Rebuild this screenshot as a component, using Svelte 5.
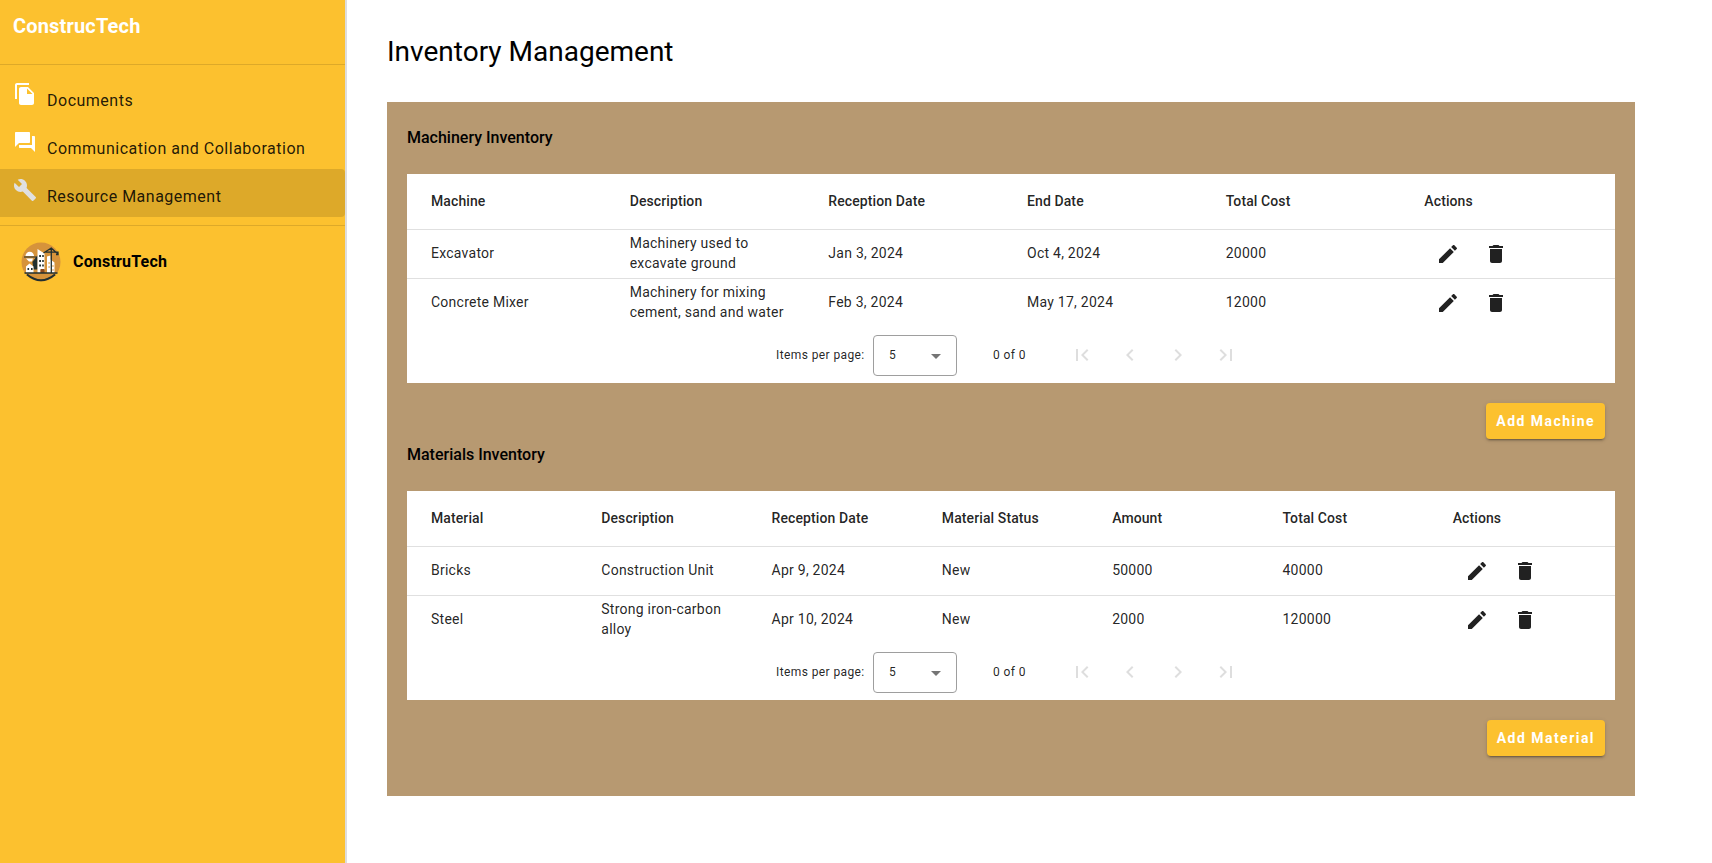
<script>
  const icons = {
    copy: 'M16 1H4c-1.1 0-2 .9-2 2v14h2V3h12V1zm-1 4l6 6v10c0 1.1-.9 2-2 2H7.99C6.89 23 6 22.1 6 21l.01-14c0-1.1.89-2 1.99-2h7zm-1 7h5.5L14 6.5V12z',
    forum: 'M21 6h-2v9H6v2c0 .55.45 1 1 1h11l4 4V7c0-.55-.45-1-1-1zm-4 6V3c0-.55-.45-1-1-1H3c-.55 0-1 .45-1 1v14l4-4h10c.55 0 1-.45 1-1z',
    build: 'M22.7 19l-9.1-9.1c.9-2.3.4-5-1.5-6.9-2-2-5-2.4-7.4-1.3L9 6 6 9 1.6 4.7C.4 7.1.9 10.1 2.9 12.1c1.9 1.9 4.6 2.4 6.9 1.5l9.1 9.1c.4.4 1 .4 1.4 0l2.3-2.3c.5-.4.5-1.1.1-1.4z',
    edit: 'M3 17.25V21h3.75L17.81 9.94l-3.75-3.75L3 17.25zM20.71 7.04c.39-.39.39-1.02 0-1.41l-2.34-2.34c-.39-.39-1.02-.39-1.41 0l-1.83 1.83 3.75 3.75 1.83-1.83z',
    trash: 'M6 19c0 1.1.9 2 2 2h8c1.1 0 2-.9 2-2V7H6v12zM19 4h-3.5l-1-1h-5l-1 1H5v2h14V4z'
  };

  const pages = [
    'M18.41 16.59L13.82 12l4.59-4.59L17 6l-6 6 6 6zM6 6h2v12H6z',
    'M15.41 7.41L14 6l-6 6 6 6 1.41-1.41L10.83 12z',
    'M10 6L8.59 7.41 13.17 12l-4.58 4.59L10 18l6-6z',
    'M5.59 7.41L10.18 12l-4.59 4.59L7 18l6-6-6-6zM16 6h2v12h-2z'
  ];

  const nav = [
    { icon: 'copy', label: 'Documents' },
    { icon: 'forum', label: 'Communication and Collaboration' },
    { icon: 'build', label: 'Resource Management', active: true }
  ];

  const sections = [
    {
      title: 'Machinery Inventory',
      columns: ['Machine', 'Description', 'Reception Date', 'End Date', 'Total Cost'],
      rows: [
        ['Excavator', 'Machinery used to excavate ground', 'Jan 3, 2024', 'Oct 4, 2024', '20000'],
        ['Concrete Mixer', 'Machinery for mixing cement, sand and water', 'Feb 3, 2024', 'May 17, 2024', '12000']
      ],
      add: 'Add Machine'
    },
    {
      title: 'Materials Inventory',
      columns: ['Material', 'Description', 'Reception Date', 'Material Status', 'Amount', 'Total Cost'],
      rows: [
        ['Bricks', 'Construction Unit', 'Apr 9, 2024', 'New', '50000', '40000'],
        ['Steel', 'Strong iron-carbon alloy', 'Apr 10, 2024', 'New', '2000', '120000']
      ],
      add: 'Add Material'
    }
  ];
</script>

{#snippet glyph(d)}
  <svg class="glyph" viewBox="0 0 24 24" aria-hidden="true"><path {d} /></svg>
{/snippet}

<div class="app">
  <aside>
    <div class="brand">ConstrucTech</div>
    <nav>
      {#each nav as item}
        <a class="item" class:active={item.active} href="#top">
          {@render glyph(icons[item.icon])}
          <span>{item.label}</span>
        </a>
      {/each}
    </nav>
    <div class="user">
      <svg class="avatar" viewBox="0 0 40 40" aria-hidden="true">
        <circle cx="20" cy="20" r="19.5" fill="#d6933b" />
        <path d="M6 32.5q14 11.5 28 0" fill="none" stroke="#22302f" stroke-width="2" />
        <path d="M4.5 14a4.2 4.2 0 0 1 8.5 0z" fill="#fff" />
        <path d="M5 16.5h7l-1 3H8z" fill="#fff" />
        <path d="M3 15h12.5M12 20l4-5v12h-3z" fill="#22302f" stroke="#22302f" stroke-width="1.2" />
        <path d="M5 31v-6.5l3.5-3 4 3V31z" fill="#fff" />
        <path d="M16.5 31V7l7 4.5V28h-4v3z" fill="#fff" />
        <path d="M19.5 27h4v4h-4z" fill="#8b4a1d" />
        <path d="M26 31V14.5l3.5-1v4l4 3V31z" fill="#fff" />
        <path d="M18.2 14h1.8M21.2 14h1.6M18.2 19h1.8M21.2 19h1.6M18.2 23.5h1.8M21.2 23.5h1.6" stroke="#22302f" stroke-width="1.8" />
        <path d="M6.5 27h1.6M10 27h1.6" stroke="#22302f" stroke-width="2" />
        <path d="M27.5 21h1.2M31.4 24h1.2M27.5 25h1.2M31.4 28h1.2" stroke="#d6933b" stroke-width="1.6" />
        <path d="M30.3 5.5V31M22.5 11l7.8-5 6.5 6M24.5 10.2h12.5v2.5h-2" fill="none" stroke="#22302f" stroke-width="1.3" />
        <path d="M3.5 31h33" stroke="#22302f" stroke-width="1.5" />
      </svg>
      <strong>ConstruTech</strong>
    </div>
  </aside>

  <main>
    <h1>Inventory Management</h1>
    <div class="card">
      {#each sections as section}
        <section>
          <h2>{section.title}</h2>
          <div class="panel">
            <div class="row head">
              {#each section.columns as column}
                <div class="cell">{column}</div>
              {/each}
              <div class="cell">Actions</div>
            </div>
            {#each section.rows as row}
              <div class="row body">
                {#each row as value}
                  <div class="cell">{value}</div>
                {/each}
                <div class="cell actions">
                  <button aria-label="Edit">{@render glyph(icons.edit)}</button>
                  <button aria-label="Delete">{@render glyph(icons.trash)}</button>
                </div>
              </div>
            {/each}
            <div class="paginator">
              <span class="label">Items per page:</span>
              <div class="select">
                <span>5</span>
                <svg viewBox="0 0 10 5" aria-hidden="true"><path d="M0 0h10L5 5z" /></svg>
              </div>
              <span class="range">0 of 0</span>
              <div class="pages">
                {#each pages as d}
                  <span class="page">{@render glyph(d)}</span>
                {/each}
              </div>
            </div>
          </div>
          <div class="footer"><button class="add">{section.add}</button></div>
        </section>
      {/each}
    </div>
  </main>
</div>

<style>
  :global(body) {
    background: #fff;
    font-family: Roboto, 'Liberation Sans', sans-serif;
  }
  .app {
    display: flex;
    height: 863px;
    overflow: hidden;
  }
  .glyph {
    display: block;
    width: 24px;
    height: 24px;
    fill: currentColor;
    flex: none;
  }
  button {
    border: 0;
    background: none;
    padding: 0;
    font: inherit;
    color: inherit;
  }

  aside {
    flex: none;
    width: 345px;
    background: #fcc12f;
    border-right: 2px solid #ddd;
  }
  .brand {
    height: 64px;
    box-sizing: border-box;
    padding: 14px 13px 0;
    font-size: 20px;
    line-height: 24px;
    font-weight: 700;
    letter-spacing: 0.17px;
    color: #fff;
  }
  nav {
    border-top: 1px solid rgba(0, 0, 0, 0.12);
    border-bottom: 1px solid rgba(0, 0, 0, 0.12);
    padding: 8px 0;
  }
  .item {
    display: flex;
    height: 48px;
    box-sizing: border-box;
    padding: 9px 13px 0;
    gap: 10px;
    border-radius: 0 4px 4px 0;
    color: #fff;
    text-decoration: none;
  }
  .item span {
    padding-top: 7px;
    font-size: 16px;
    line-height: 24px;
    letter-spacing: 0.5px;
    color: rgba(0, 0, 0, 0.87);
  }
  .item.active {
    background: rgba(0, 0, 0, 0.12);
    color: #e0e0e0;
  }
  .user {
    display: flex;
    align-items: center;
    gap: 12px;
    padding: 16px 21px;
  }
  .avatar {
    width: 40px;
    height: 40px;
  }
  .user strong {
    font-size: 16px;
    line-height: 24px;
    font-weight: 700;
    letter-spacing: 0.18px;
  }

  main {
    flex: 1;
    padding: 34px 77px 0 40px;
  }
  h1 {
    margin: 0 0 32px;
    font-size: 28px;
    line-height: 36px;
    font-weight: 400;
    color: #000;
  }
  .card {
    background: #b79971;
    padding: 20px 20px 40px;
  }
  h2 {
    margin: 0 0 20px;
    font-size: 16px;
    line-height: 32px;
    font-weight: 500;
    color: #000;
  }
  .panel {
    background: #fff;
    color: rgba(0, 0, 0, 0.87);
  }
  .row {
    display: flex;
    align-items: center;
    height: 48px;
    border-bottom: 1px solid #e0e0e0;
    font-size: 14px;
    line-height: 20px;
    letter-spacing: 0.25px;
  }
  .row.head {
    height: 55px;
    font-weight: 500;
    letter-spacing: 0.1px;
  }
  .row.body:nth-last-child(2) {
    border-bottom: 0;
  }
  .cell {
    flex: 1 1 0;
    padding: 0 16px 2px;
    min-width: 0;
  }
  .cell:first-child {
    padding-left: 24px;
  }
  .cell:last-child {
    padding-right: 24px;
  }
  .cell.actions {
    display: flex;
    padding-bottom: 0;
  }
  .actions button {
    width: 48px;
    height: 48px;
    padding: 12px;
  }

  .paginator {
    display: flex;
    align-items: center;
    height: 56px;
    padding-left: 369px;
    font-size: 12px;
    line-height: 20px;
    letter-spacing: 0.4px;
  }
  .label {
    width: 97px;
  }
  .select {
    display: flex;
    align-items: center;
    justify-content: space-between;
    box-sizing: border-box;
    width: 84px;
    height: 41px;
    padding: 0 15px;
    border: 1px solid #9e9e9e;
    border-radius: 4px;
  }
  .select svg {
    width: 10px;
    height: 5px;
    margin-top: 2px;
    fill: #757575;
  }
  .range {
    width: 65px;
    padding-left: 36px;
  }
  .pages {
    display: flex;
    color: #dedede;
  }
  .page {
    padding: 12px;
  }

  .footer {
    display: flex;
    justify-content: flex-end;
    padding: 20px 10px 0;
  }
  .add {
    height: 36px;
    padding: 0 10px;
    border-radius: 4px;
    background: #fcc12f;
    color: #fff;
    font-size: 14px;
    font-weight: 700;
    letter-spacing: 1.46px;
    box-shadow:
      0 3px 1px -2px rgba(0, 0, 0, 0.2),
      0 2px 2px 0 rgba(0, 0, 0, 0.14),
      0 1px 5px 0 rgba(0, 0, 0, 0.12);
  }
</style>
